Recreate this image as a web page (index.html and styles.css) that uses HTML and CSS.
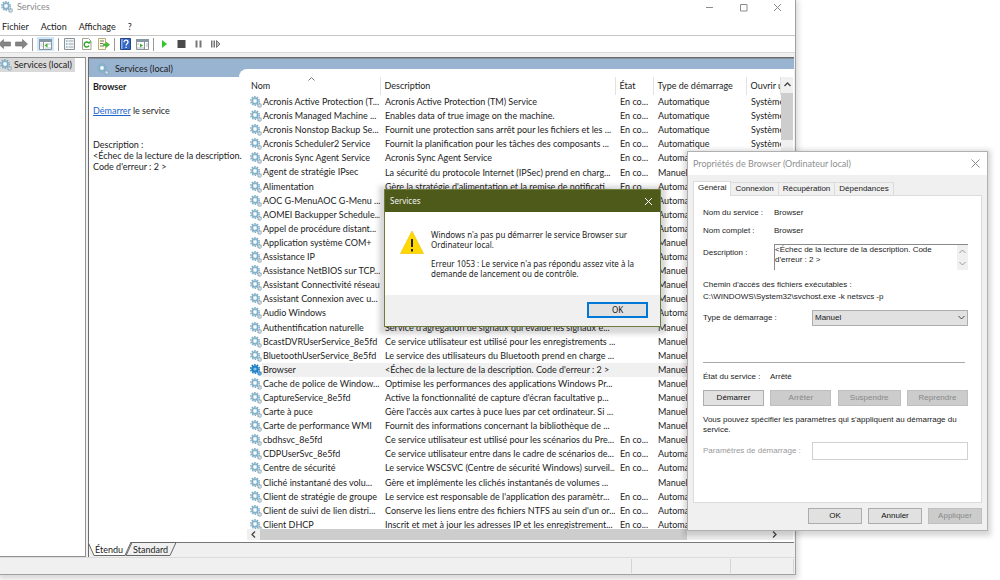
FILE: index.html
```html
<!DOCTYPE html>
<html lang="fr">
<head>
<meta charset="utf-8">
<title>Services</title>
<link rel="stylesheet" href="styles.css">
</head>
<body>
<svg class="defs" aria-hidden="true">
  <symbol id="gear" viewBox="0 0 12 12">
    <circle cx="5" cy="5" r="4.3" fill="none" stroke="currentColor" stroke-width="1.4" stroke-dasharray="1.5 1.2"/>
    <circle cx="5" cy="5" r="2.9" fill="#d3e8f3" stroke="currentColor" stroke-width="1.5"/>
    <circle cx="5" cy="5" r="1.2" fill="#fff"/>
    <circle cx="9.6" cy="9.4" r="1.8" fill="#cfdfe8" stroke="#7d9aaa" stroke-width="1.1" stroke-dasharray="1.1 .6"/>
  </symbol>
  <symbol id="gear-on" viewBox="0 0 12 12">
    <circle cx="5" cy="5" r="4.3" fill="none" stroke="#1f7fc4" stroke-width="1.6" stroke-dasharray="1.5 1.2"/>
    <circle cx="5" cy="5" r="2.7" fill="#8cc8f0" stroke="#1f7fc4" stroke-width="2.2"/>
    <circle cx="9.6" cy="9.4" r="1.8" fill="#5aa9e0" stroke="#2f80bd" stroke-width="1.1" stroke-dasharray="1.1 .6"/>
  </symbol>
</svg>

<main class="window">
  <header class="titlebar">
    <svg class="gear"><use href="#gear"/></svg>
    <h1 class="title">Services</h1>
    <div class="caption-buttons">
      <button aria-label="Réduire"><svg viewBox="0 0 9 9"><path d="M1 4.5h7"/></svg></button>
      <button aria-label="Agrandir"><svg viewBox="0 0 9 9"><path d="M1.5 1.5h6.500v6.500h-6.500z"/></svg></button>
      <button aria-label="Fermer"><svg viewBox="0 0 9 9"><path d="M1 1l7 7M8 1l-7 7"/></svg></button>
    </div>
  </header>
  <nav class="menubar">
    <button>Fichier</button><button>Action</button><button>Affichage</button><button>?</button>
  </nav>
  <div class="toolbar">
    <button class="nav-back" aria-label="Précédent"><svg viewBox="0 0 13 12"><path d="M.5 6l5-4.500v2.500h7v4h-7v2.500z" fill="#858585" stroke="#6d6d6d" stroke-width=".6"/></svg></button>
    <button aria-label="Suivant"><svg viewBox="0 0 13 12"><path d="M12.500 6l-5-4.500v2.500h-7v4h7v2.500z" fill="#858585" stroke="#6d6d6d" stroke-width=".6"/></svg></button>
    <span class="rule"></span>
    <button class="pressed" aria-label="Arborescence"><svg viewBox="0 0 13 12"><path d="M.5 1.500h12v10h-12z" fill="#fff" stroke="#8b959b"/><path d="M0 1h13v3h-13z" fill="#8796a3"/><path d="M4.500 4v7" stroke="#8b959b"/><path d="M1.500 6h2M1.500 8h2M6 6h6M6 10h6" stroke="#b9c4cb"/><path d="M8.500 5.500v4l-3-2z" fill="#3fb02c"/></svg></button>
    <span class="rule"></span>
    <button aria-label="Propriétés"><svg viewBox="0 0 13 12"><path d="M1.500 .5h10v11h-10z" fill="#f3f5f6" stroke="#89929a"/><path d="M3 3h1.500M3 6h1.500M3 9h1.500" stroke="#4a93b5"/><path d="M5.500 3h5M5.500 6h5M5.500 9h5" stroke="#9aa5ac"/></svg></button>
    <button aria-label="Actualiser"><svg viewBox="0 0 13 12"><path d="M2.500 .5h6l2.500 2.500v8.500h-8.500z" fill="#fff" stroke="#a3a38d"/><path d="M9 7.500a2.500 2.500 0 1 1-.3-2.500" fill="none" stroke="#2fa52c" stroke-width="1.400"/><path d="M7.500 5.500h3v-3z" fill="#2fa52c"/></svg></button>
    <button aria-label="Exporter la liste"><svg viewBox="0 0 13 12"><path d="M1.500 .5h7v11h-7z" fill="#fffbe0" stroke="#b8ad80"/><path d="M3 3h4M3 5.500h3M3 8h4" stroke="#777"/><path d="M6 5.500h3v-2l4 3.200-4 3.300v-2h-3z" fill="#4ab83b"/></svg></button>
    <span class="rule"></span>
    <button aria-label="Aide"><svg viewBox="0 0 13 12"><path d="M1.500 .5h10v11h-10z" fill="#3567c4" stroke="#234487"/><path d="M2 1h1.500v10h-1.500z" fill="#8fb0e8"/><path d="M5 4.200c0-2.700 4-2.700 4 0 0 1.600-1.900 1.500-1.900 3.200M7.100 8.700v1.300" fill="none" stroke="#fff" stroke-width="1.300"/></svg></button>
    <button aria-label="Volet Actions"><svg viewBox="0 0 13 12"><path d="M.5 1.500h12v10h-12z" fill="#fff" stroke="#8b959b"/><path d="M0 1h13v3h-13z" fill="#8796a3"/><path d="M8.500 4v7" stroke="#8b959b"/><path d="M10 6h2M10 8h2M1 6h2M1 10h7" stroke="#b0bbc3"/><path d="M4 5.500v4l3-2z" fill="#3fb02c"/></svg></button>
    <span class="rule"></span>
    <button aria-label="Démarrer le service"><svg viewBox="0 0 13 12"><path d="M4 2l5 4-5 4z" fill="#35c52c"/></svg></button>
    <button aria-label="Arrêter le service"><svg viewBox="0 0 13 12"><path d="M2.500 2h8v8h-8z" fill="#4b4b4b"/></svg></button>
    <button aria-label="Suspendre le service"><svg viewBox="0 0 13 12"><path d="M3.500 2.500h2v7h-2zM7.500 2.500h2v7h-2z" fill="#777"/></svg></button>
    <button aria-label="Redémarrer le service"><svg viewBox="0 0 13 12"><path d="M2 2.500h1.500v7h-1.500zM4.500 2.500h1.500v7h-1.500z" fill="#777"/><path d="M7.500 2.500v7l3.500-3.500z" fill="#bbb" stroke="#777"/></svg></button>
  </div>

  <div class="panes">
    <aside class="tree">
      <div class="tree-item"><svg class="gear"><use href="#gear"/></svg><span>Services (local)</span></div>
    </aside>
    <section class="view">
      <div class="view-header"><svg class="gear"><use href="#gear"/></svg><h2 class="title">Services (local)</h2></div>
      <div class="view-body">
        <div class="details">
          <h3>Browser</h3>
          <p class="action"><a href="#start">Démarrer</a> le service</p>
          <p>Description :</p>
          <p>&lt;Échec de la lecture de la description.<br>Code d'erreur : 2 &gt;</p>
        </div>
        <div class="list">
          <div class="list-scroll">
            <div class="list-view">
              <table class="services">
                <colgroup><col class="c-name"><col class="c-desc"><col class="c-state"><col class="c-type"><col></colgroup>
                <thead><tr><th class="sorted">Nom<svg viewBox="0 0 7 4"><path d="M.5 3.500l3-3 3 3"/></svg></th><th>Description</th><th>État</th><th>Type de démarrage</th><th>Ouvrir une session</th></tr></thead>
                <tbody>
                <tr><td><svg class="gear"><use href="#gear"/></svg>Acronis Active Protection (T...</td><td>Acronis Active Protection (TM) Service</td><td>En co...</td><td>Automatique</td><td>Système</td></tr>
                <tr><td><svg class="gear"><use href="#gear"/></svg>Acronis Managed Machine ...</td><td>Enables data of true image on the machine.</td><td>En co...</td><td>Automatique</td><td>Système</td></tr>
                <tr><td><svg class="gear"><use href="#gear"/></svg>Acronis Nonstop Backup Se...</td><td>Fournit une protection sans arrêt pour les fichiers et les ...</td><td>En co...</td><td>Automatique</td><td>Système</td></tr>
                <tr><td><svg class="gear"><use href="#gear"/></svg>Acronis Scheduler2 Service</td><td>Fournit la planification pour les tâches des composants ...</td><td>En co...</td><td>Automatique</td><td>Système</td></tr>
                <tr><td><svg class="gear"><use href="#gear"/></svg>Acronis Sync Agent Service</td><td>Acronis Sync Agent Service</td><td>En co...</td><td>Automa</td><td></td></tr>
                <tr><td><svg class="gear"><use href="#gear"/></svg>Agent de stratégie IPsec</td><td>La sécurité du protocole Internet (IPSec) prend en charg...</td><td>En co...</td><td>Manuel</td><td></td></tr>
                <tr><td><svg class="gear"><use href="#gear"/></svg>Alimentation</td><td>Gère la stratégie d'alimentation et la remise de notificati...</td><td>En co...</td><td>Automa</td><td></td></tr>
                <tr><td><svg class="gear"><use href="#gear"/></svg>AOC G-MenuAOC G-Menu ...</td><td></td><td></td><td>Automa</td><td></td></tr>
                <tr><td><svg class="gear"><use href="#gear"/></svg>AOMEI Backupper Schedule...</td><td></td><td></td><td>Automa</td><td></td></tr>
                <tr><td><svg class="gear"><use href="#gear"/></svg>Appel de procédure distant...</td><td></td><td></td><td>Automa</td><td></td></tr>
                <tr><td><svg class="gear"><use href="#gear"/></svg>Application système COM+</td><td></td><td></td><td>Manuel</td><td></td></tr>
                <tr><td><svg class="gear"><use href="#gear"/></svg>Assistance IP</td><td></td><td></td><td>Automa</td><td></td></tr>
                <tr><td><svg class="gear"><use href="#gear"/></svg>Assistance NetBIOS sur TCP...</td><td></td><td></td><td>Manuel</td><td></td></tr>
                <tr><td><svg class="gear"><use href="#gear"/></svg>Assistant Connectivité réseau</td><td></td><td></td><td>Manuel</td><td></td></tr>
                <tr><td><svg class="gear"><use href="#gear"/></svg>Assistant Connexion avec u...</td><td></td><td></td><td>Manuel</td><td></td></tr>
                <tr><td><svg class="gear"><use href="#gear"/></svg>Audio Windows</td><td></td><td></td><td>Automa</td><td></td></tr>
                <tr><td><svg class="gear"><use href="#gear"/></svg>Authentification naturelle</td><td>Service d'agrégation de signaux qui évalue les signaux e...</td><td></td><td>Manuel</td><td></td></tr>
                <tr><td><svg class="gear"><use href="#gear"/></svg>BcastDVRUserService_8e5fd</td><td>Ce service utilisateur est utilisé pour les enregistrements ...</td><td></td><td>Manuel</td><td></td></tr>
                <tr><td><svg class="gear"><use href="#gear"/></svg>BluetoothUserService_8e5fd</td><td>Le service des utilisateurs du Bluetooth prend en charge ...</td><td></td><td>Manuel</td><td></td></tr>
                <tr class="selected"><td><svg class="gear"><use href="#gear-on"/></svg>Browser</td><td>&lt;Échec de la lecture de la description. Code d'erreur : 2 &gt;</td><td></td><td>Manuel</td><td></td></tr>
                <tr><td><svg class="gear"><use href="#gear"/></svg>Cache de police de Window...</td><td>Optimise les performances des applications Windows Pr...</td><td></td><td>Manuel</td><td></td></tr>
                <tr><td><svg class="gear"><use href="#gear"/></svg>CaptureService_8e5fd</td><td>Active la fonctionnalité de capture d'écran facultative p...</td><td></td><td>Manuel</td><td></td></tr>
                <tr><td><svg class="gear"><use href="#gear"/></svg>Carte à puce</td><td>Gère l'accès aux cartes à puce lues par cet ordinateur. Si ...</td><td></td><td>Manuel</td><td></td></tr>
                <tr><td><svg class="gear"><use href="#gear"/></svg>Carte de performance WMI</td><td>Fournit des informations concernant la bibliothèque de ...</td><td></td><td>Manuel</td><td></td></tr>
                <tr><td><svg class="gear"><use href="#gear"/></svg>cbdhsvc_8e5fd</td><td>Ce service utilisateur est utilisé pour les scénarios du Pre...</td><td>En co...</td><td>Manuel</td><td></td></tr>
                <tr><td><svg class="gear"><use href="#gear"/></svg>CDPUserSvc_8e5fd</td><td>Ce service utilisateur entre dans le cadre de scénarios de...</td><td>En co...</td><td>Automa</td><td></td></tr>
                <tr><td><svg class="gear"><use href="#gear"/></svg>Centre de sécurité</td><td>Le service WSCSVC (Centre de sécurité Windows) surveil...</td><td>En co...</td><td>Automa</td><td></td></tr>
                <tr><td><svg class="gear"><use href="#gear"/></svg>Cliché instantané des volu...</td><td>Gère et implémente les clichés instantanés de volumes ...</td><td></td><td>Manuel</td><td></td></tr>
                <tr><td><svg class="gear"><use href="#gear"/></svg>Client de stratégie de groupe</td><td>Le service est responsable de l'application des paramètr...</td><td>En co...</td><td>Automa</td><td></td></tr>
                <tr><td><svg class="gear"><use href="#gear"/></svg>Client de suivi de lien distri...</td><td>Conserve les liens entre des fichiers NTFS au sein d'un or...</td><td>En co...</td><td>Automa</td><td></td></tr>
                <tr><td><svg class="gear"><use href="#gear"/></svg>Client DHCP</td><td>Inscrit et met à jour les adresses IP et les enregistrement...</td><td>En co...</td><td>Automa</td><td></td></tr>
                </tbody>
              </table>
            </div>
            <div class="vbar"><svg viewBox="0 0 7 5"><path d="M.5 4l3-3 3 3"/></svg><span class="thumb"></span></div>
          </div>
          <div class="hbar"><svg viewBox="0 0 5 7"><path d="M4 .5l-3 3 3 3"/></svg><span class="track"><span class="thumb"></span></span><svg viewBox="0 0 5 7"><path d="M1 .5l3 3-3 3"/></svg></div>
        </div>
      </div>
      <div class="view-tabs">
        <svg class="tab-shape" viewBox="0 0 90 14"><path d="M38 13.500L44 .5H88L82 13.500z" fill="#f0f0f0" stroke="#666"/><path d="M0 0L6 13.500H37L43 0z" fill="#fff"/><path d="M0 0L6 13.500H37L43 0" fill="none" stroke="#666"/></svg>
        <button>Étendu</button><button>Standard</button>
      </div>
    </section>
  </div>
  <footer class="statusbar"><span></span><span></span><span></span></footer>
</main>

<section class="props" role="dialog" aria-label="Propriétés de Browser">
  <header class="props-title"><h2 class="title">Propriétés de Browser (Ordinateur local)</h2>
    <button aria-label="Fermer"><svg viewBox="0 0 9 9"><path d="M.5 .5l8 8M8.500 .5l-8 8"/></svg></button></header>
  <div class="props-body">
    <nav class="tabs"><button class="current">Général</button><button>Connexion</button><button>Récupération</button><button>Dépendances</button></nav>
    <div class="sheet">
      <div class="line"><span class="label">Nom du service :</span><span>Browser</span></div>
      <div class="line"><span class="label">Nom complet :</span><span>Browser</span></div>
      <div class="line desc"><label class="label" for="desc">Description :</label>
        <div class="memo"><textarea id="desc" readonly>&lt;Échec de la lecture de la description. Code d'erreur : 2 &gt;</textarea>
          <div class="memo-bar"><svg viewBox="0 0 7 5"><path d="M.5 4l3-3 3 3"/></svg><svg viewBox="0 0 7 5"><path d="M.5 1l3 3 3-3"/></svg></div></div></div>
      <p class="path">Chemin d'accès des fichiers exécutables :<br>C:\WINDOWS\System32\svchost.exe -k netsvcs -p</p>
      <div class="line start"><label class="long" for="type">Type de démarrage :</label>
        <div class="select"><select id="type"><option>Manuel</option></select><svg viewBox="0 0 7 5"><path d="M.5 1l3 3 3-3"/></svg></div></div>
      <hr>
      <div class="line status"><span class="label">État du service :</span><span>Arrêté</span></div>
      <div class="commands"><button class="btn">Démarrer</button><button class="btn" disabled>Arrêter</button><button class="btn" disabled>Suspendre</button><button class="btn" disabled>Reprendre</button></div>
      <p class="hint">Vous pouvez spécifier les paramètres qui s'appliquent au démarrage du<br>service.</p>
      <div class="line params"><label class="long" for="params">Paramètres de démarrage :</label><input id="params" type="text" disabled></div>
    </div>
    <div class="props-actions"><button class="btn">OK</button><button class="btn">Annuler</button><button class="btn" disabled>Appliquer</button></div>
  </div>
</section>

<section class="alert" role="alertdialog" aria-label="Services">
  <header class="alert-title"><h2 class="title">Services</h2>
    <button aria-label="Fermer"><svg viewBox="0 0 9 9"><path d="M1 1l7 7M8 1l-7 7"/></svg></button></header>
  <div class="alert-body">
    <svg class="warning" viewBox="0 0 24 24"><path d="M12 1L23.500 23.500H.5z" fill="#ffd800" stroke="#f0bc00" stroke-width=".6"/><path d="M12 9v8M12 19v2.500" stroke="#222" stroke-width="2"/></svg>
    <div><p>Windows n'a pas pu démarrer le service Browser sur<br>Ordinateur local.</p>
    <p>Erreur 1053 : Le service n'a pas répondu assez vite à la<br>demande de lancement ou de contrôle.</p></div>
  </div>
  <footer class="alert-footer"><button class="btn default">OK</button></footer>
</section>
</body>
</html>
```
FILE: styles.css
```css
* { box-sizing: border-box; }
body {
  margin: 0;
  height: 100vh;
  overflow: hidden;
  position: relative;
  background: #fff;
  color: #1c1c1c;
  font: 9px/12px Lato, "Open Sans", sans-serif;
}
h1, h2, h3, p { margin: 0; font-size: inherit; }
.title { font-weight: normal; }
button { border: 0; padding: 0; background: none; color: inherit; font: inherit; }
svg { display: block; flex: none; }
.defs { position: absolute; width: 0; height: 0; }
.gear { width: 12px; height: 12px; color: #82aec6; }

/* Main window */
.window {
  position: absolute;
  inset: 0 204px 5px 0;
  display: flex;
  flex-direction: column;
  background: #f0f0f0;
  border-right: 1px solid #a0a0a0;
  border-bottom: 1px solid #a0a0a0;
  box-shadow: 0 2px 6px 2px rgba(0, 0, 0, .16);
}
.titlebar { display: flex; align-items: center; gap: 4px; height: 17px; padding: 0 13px 3px 1px; background: #fff; color: #8a8a8a; }
.caption-buttons { display: flex; gap: 25px; margin-left: auto; }
.caption-buttons svg, .props-title button svg, .alert-title button svg { width: 9px; height: 9px; fill: none; stroke: #8c8c8c; }
.menubar { display: flex; gap: 12px; height: 19px; padding: 1px 2px 0; background: #fff; border-bottom: 1px solid #c6c6c6; }
.toolbar { display: flex; align-items: center; gap: 4px; height: 17px; background: #fff; border-bottom: 1px solid #dadada; }
.toolbar button { padding: 1px 0; }
.toolbar svg { width: 13px; height: 12px; }
.toolbar .nav-back { margin-left: -2px; }
.toolbar .pressed { padding: 1px 2px; background: #cce8ff; }
.toolbar .rule { width: 1px; height: 13px; background: #999; }

.panes { flex: 1; min-height: 0; display: grid; grid-template-columns: 86px 1fr; gap: 2px; padding: 4px 1px 0 0; }
.tree { background: #fff; border: 1px solid #919191; border-width: 1px 1px 1px 0; }
.tree-item { display: flex; gap: 2px; width: 75px; padding: 1px 0; white-space: nowrap; background: #d9d9d9; }
.view { display: flex; flex-direction: column; min-width: 0; min-height: 0; border: solid #6b6b6b; border-width: 1px 0 0 1px; }
.view-header { display: flex; align-items: center; gap: 6px; height: 19px; padding: 2px 8px 0; background: #99b4d1; border-top: 1px solid #84929f; }
.view-body { flex: 1; min-height: 0; display: grid; grid-template-columns: 150px 1fr; padding-bottom: 2px; background: #fff; }
.details { position: relative; z-index: 1; padding: 4px; line-height: 11px; white-space: nowrap; }
.details .action { margin: 13px 0 23px; }
.details a { color: #1a66cc; }
.list { position: relative; display: flex; flex-direction: column; min-width: 0; min-height: 0; margin-top: -8px; padding: 8px 1px 0 8px; background: #fff; border-top-left-radius: 8px; }
.list-scroll { flex: 1; min-height: 0; display: flex; }
.list-view { flex: 1; min-width: 0; overflow: hidden; }
.services { width: 100%; height: calc(100% + 3px); table-layout: fixed; border-collapse: collapse; }
.c-name { width: 133px; }
.c-desc { width: 235px; }
.c-state { width: 38px; }
.c-type { width: 93px; }
.services th, .services td { padding: 0 0 0 5px; text-align: left; white-space: nowrap; overflow: hidden; line-height: 12px; }
.services th { height: 18px; padding-left: 4px; border-right: 1px solid #e2e2e2; font-weight: normal; }
.services td { height: 14px; }
.services td:first-child { display: flex; align-items: center; gap: 1px; padding-left: 3px; }
.services .sorted { position: relative; }
.sorted svg { position: absolute; top: 0; left: 46%; width: 7px; height: 4px; fill: none; stroke: #777; }
.selected { background: linear-gradient(90deg, #fff 15px, #f0f0f0 15px); }
.vbar { width: 12px; display: flex; flex-direction: column; align-items: center; background: #f0f0f0; }
.vbar svg { width: 7px; height: 5px; margin: 5px 0 6px; }
.vbar svg, .hbar svg { fill: none; stroke: #444; stroke-width: 1.3; }
.vbar .thumb { width: 12px; height: 10.3%; background: #cdcdcd; }
.hbar { display: flex; align-items: center; gap: 4px; height: 11px; padding: 0 16px 0 4px; background: #f0f0f0; }
.hbar svg { width: 5px; height: 7px; }
.hbar .track { flex: 1; height: 11px; }
.hbar .thumb { display: block; width: 84%; height: 11px; background: #cdcdcd; }
.view-tabs { position: relative; display: flex; height: 15px; padding: 1px 6px 0; gap: 10px; background: #f0f0f0; border-top: 1px solid #777; }
.view-tabs button { position: relative; height: 12px; }
.tab-shape { position: absolute; top: -1px; left: -1px; width: 90px; height: 14px; }
.statusbar { display: flex; justify-content: flex-end; height: 17px; border-top: 1px solid #dcdcdc; }
.statusbar span { width: 99px; margin: 1px 0; border-left: 1px solid #d4d4d4; }
.statusbar span:nth-child(2) { width: 63px; }
.statusbar span:nth-child(3) { width: 2px; }

/* Shared dialog button */
.btn { height: 16px; border: 1px solid #adadad; background: #e1e1e1; color: #111; text-align: center; }
.btn:disabled { background: #cccccc; border-color: #bfbfbf; color: #888; }

/* Properties dialog */
.props {
  position: absolute;
  top: 151px;
  right: 12px;
  width: 301px;
  background: #f0f0f0;
  border: 1px solid #b0b0b0;
  box-shadow: 0 2px 5px 3px rgba(0, 0, 0, .16);
  font: 8px/10px "Liberation Sans", Arial, sans-serif;
}
.props-title { display: flex; align-items: center; justify-content: space-between; height: 23px; padding: 0 7px 0 5px; background: #fff; color: #8f8f8f; font: 9px/12px Lato, "Open Sans", sans-serif; }
.props-body { padding: 6px 5px; }
.tabs { display: flex; align-items: flex-end; }
.tabs button { height: 13px; padding: 0 4px; background: #f0f0f0; border: 1px solid #dcdcdc; border-left: 0; border-bottom: 0; }
.tabs .current { position: relative; height: 15px; margin-bottom: -1px; padding-bottom: 2px; background: #fff; border-left: 1px solid #dcdcdc; }
.sheet { padding: 12px 13px 42px 9px; background: #fff; border: 1px solid #dcdcdc; }
.line { display: flex; align-items: center; min-height: 10px; margin-bottom: 8px; }
.label { width: 71px; }
.long { width: 109px; white-space: nowrap; }
.desc { margin-bottom: 9px; }
.desc .label { padding-bottom: 8px; }
.memo { flex: 1; display: flex; height: 26px; border: solid #8a8a8a; border-width: 1px 0 0 1px; }
.memo textarea { flex: 1; min-width: 0; padding: 0; border: 0; resize: none; overflow: hidden; font: inherit; color: inherit; }
.memo-bar { width: 11px; display: flex; flex-direction: column; align-items: center; justify-content: space-between; padding: 4px 0; background: #f0f0f0; }
.memo-bar svg, .select svg { width: 7px; height: 5px; fill: none; stroke: #999; }
.path { margin-bottom: 7px; line-height: 12px; }
.start { margin-bottom: 36px; }
.select { position: relative; flex: 1; }
.select select { display: block; width: 100%; height: 16px; padding: 0 2px; appearance: none; border: 1px solid #adadad; border-radius: 0; background: #e1e1e1; color: inherit; font: inherit; }
.select svg { position: absolute; right: 3px; top: 5px; stroke: #444; }
hr { margin: 0 3px 9px 0; border: 0; border-top: 1px solid #a8a8a8; }
.status { margin-bottom: 8px; }
.status .label { width: 67px; }
.commands { display: grid; grid-template-columns: 61px 61px 63px 61px; justify-content: space-between; margin-bottom: 9px; }
.hint { margin-bottom: 7px; white-space: nowrap; }
.params { margin: 0; color: #9a9a9a; }
.params input { flex: 1; min-width: 0; height: 18px; border: 1px solid #d0d0d0; background: #fff; }
.props-actions { display: grid; grid-template-columns: repeat(3, 54px); justify-content: flex-end; gap: 6px; padding-top: 5px; }

/* Error message */
.alert {
  position: absolute;
  top: 189px;
  left: 384px;
  width: 277px;
  background: #fff;
  border: 1px solid #6f7d3c;
  box-shadow: 0 2px 5px 5px rgba(0, 0, 0, .16);
  font: 8px/10px "Noto Sans", "Open Sans", sans-serif;
}
.alert-title { display: flex; align-items: center; justify-content: space-between; height: 22px; padding: 0 7px 0 5px; background: #4d5a1a; color: #f2f2f2; }
.alert-title button svg { stroke: #fff; }
.alert-body { display: flex; gap: 7px; padding: 18px 15px 16px; }
.alert-body p + p { margin-top: 9px; }
.warning { width: 24px; height: 24px; }
.alert-footer { display: flex; justify-content: flex-end; padding: 7px 12px 8px; background: #f0f0f0; }
.default { width: 61px; border: 2px solid #0078d7; }
```
